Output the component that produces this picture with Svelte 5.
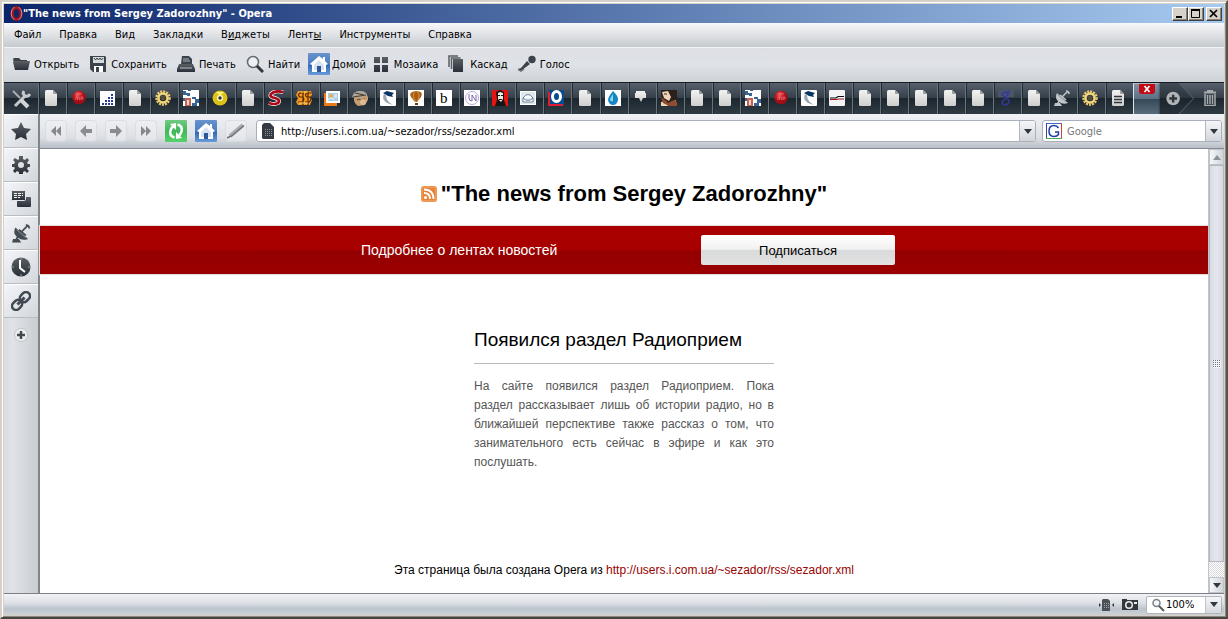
<script>
  const menus = [
    ['Файл', '', ''],
    ['Правка', '', ''],
    ['Вид', '', ''],
    ['Закладки', '', ''],
    ['В', 'и', 'джеты'],
    ['Лент', 'ы', ''],
    ['Инструменты', '', ''],
    ['Справка', '', '']
  ];
  const tools = [
    ['open', 'Открыть'],
    ['save', 'Сохранить'],
    ['print', 'Печать'],
    ['find', 'Найти'],
    ['home', 'Домой'],
    ['tile', 'Мозаика'],
    ['cascade', 'Каскад'],
    ['voice', 'Голос']
  ];
  const tabs = [
    'doc', 'ball', 'dots', 'doc', 'sun', 'blocks', 'disc', 'doc', 'ess', 'coin',
    'board', 'face', 'pen', 'balloon', 'bee', 'round', 'portrait', 'mail', 'oh', 'doc',
    'drop', 'bubble', 'photo', 'doc', 'doc', 'blocks', 'ball', 'pen', 'wire', 'doc',
    'doc', 'doc', 'doc', 'doc', 'eight', 'doc', 'dish', 'sun', 'text'
  ];
  const nav = ['rewind', 'back', 'forward', 'fast', 'reload', 'home', 'wand'];
  const panels = ['star', 'gear', 'notes', 'dish', 'clock', 'link'];
  let address = $state('http://users.i.com.ua/~sezador/rss/sezador.xml');
  let query = $state('');
</script>

{#snippet tabIcon(name)}
  <svg class="i16" viewBox="0 0 16 16" aria-hidden="true">
    {#if name === 'doc' || name === 'text'}
      <path d="M3.500 0H10l4 4v10.500q0 1.500-1.500 1.500h-9Q2 16 2 14.500v-13Q2 0 3.500 0z" fill="url(#paper)" />
      <path d="M10 0l4 4h-3q-1 0-1-1z" fill="#999d9f" />
      {#if name === 'text'}<path d="M4 6.500h8M4 9.500h8M4 12.500h8" stroke="#30363b" stroke-width="1.500" />{/if}
    {:else if name === 'ball'}
      <circle cx="8" cy="7.500" r="6.700" fill="url(#redball)" />
      <path d="M5 4q3-1.500 6 0M5 10V7q1.500-1 1.500 1v2M6.500 8q1.500-2 2 0v2M10 10V7h2v2h-2" fill="none" stroke="#ee8588" stroke-opacity=".75" stroke-width=".8" />
    {:else if name === 'dots'}
      <path fill="#fff" d="M1 1h15v15H1z" />
      <path d="M12 5h2M9 8h5M6 11h8M3 14h11" stroke="#263a9c" stroke-width="2" stroke-dasharray="2 1" />
    {:else if name === 'sun'}
      <circle cx="8" cy="8" r="6.500" fill="none" stroke="#e9ca6d" stroke-width="2.500" stroke-dasharray="2 1" />
      <circle cx="8" cy="8" r="4.500" fill="none" stroke="#f2d67c" stroke-width="2.500" />
      <circle cx="8" cy="8" r="2.500" fill="#554f38" />
    {:else if name === 'blocks'}
      <path fill="#fff" d="M0 0h16v16H0z" />
      <path fill="#386593" d="M0 1h3v2h4v3H4V5H0zM0 8h6v3H0zM9 7h4v2H9zM12 9h4v4h-4zM9 13h5v3H9zM5 0h3v1H5z" />
      <path fill="#c66450" d="M2 8h6v8H2z" /><path fill="#efd4ca" d="M4 10h2v5H4z" />
    {:else if name === 'disc'}
      <circle cx="8" cy="8" r="7.500" fill="#ddc119" /><path d="M4 2l4 4 4-4z" fill="#fff477" />
      <circle cx="8" cy="8" r="3" fill="#fff9c9" /><circle cx="8" cy="8" r="1.700" fill="#26313d" />
    {:else if name === 'ess'}
      <path d="M15 2Q7 0 3 4q-2 3 4 4 6 2 3 5-4 2-9 0" fill="none" stroke="#fff" stroke-width="4" />
      <path d="M15 2Q7 0 3 4q-2 3 4 4 6 2 3 5-4 2-9 0" fill="none" stroke="#ae0717" stroke-width="2.700" />
    {:else if name === 'coin'}
      <path d="M2 1h13l1 4-2 2 2 3-2 5H2l-2-3 2-4-2-3z" fill="#f09a20" />
      <path d="M8 3H4Q1 5 4 7h3q2 3-1 5H2M15 3h-4q-3 2 0 4h3q2 3-1 5H9M7 1v14M12 1v14" fill="none" stroke="#5d2600" stroke-width="1.200" />
      <path d="M12 2H5M3 13h9" stroke="#ffd368" />
    {:else if name === 'board'}
      <path fill="#ec7a19" d="M0 3h13v13H0z" /><path fill="#fff" d="M2 1h14v12H2z" />
      <path fill="#a5cee9" d="M4 3h10v8H4z" /><circle cx="7" cy="6" r="2" fill="#efab4f" /><path d="M4 10q4-4 6 0M10 5h3M10 7h3" stroke="#fff" fill="none" />
    {:else if name === 'face'}
      <path d="M2 6Q5 0 12 2q5 3 4 8l-3 5-7 1q-5-3-4-10" fill="#c69d72" />
      <path d="M0 7Q2 0 8 1q7 0 7 5L3 8z" fill="#aaa69c" /><path d="M1 7l13-2M3 3l9 2M5 10q2-2 3 0l5-1" stroke="#513b2a" fill="none" />
      <circle cx="11" cy="12" r="3" fill="#e1ba91" />
    {:else if name === 'pen'}
      <rect width="16" height="16" fill="#fff" rx="1" /><path d="M3 3l4-2 7 2-2 2 1 2-5-1z" fill="#083464" /><path d="M4 4Q1 9 7 13l6 2Q6 11 6 5z" fill="#9ba7b2" />
    {:else if name === 'balloon'}
      <path fill="#fff" d="M0 0h16v16H0z" /><path d="M8 1q8 0 5 6l-4 5H7L3 7q-3-5 5-6" fill="#a95e14" />
      <path d="M7 1Q3 6 8 12M9 1q4 4 0 11" stroke="#e2a650" stroke-width=".8" fill="none" /><path fill="#623a18" d="M7 13h3v2H7z" />
    {:else if name === 'bee'}
      <path fill="#fff" d="M0 0h16v16H0z" /><text x="4" y="13" font-family="Liberation Serif, serif" font-size="15">b</text>
    {:else if name === 'round'}
      <path fill="#fff" d="M0 0h16v16H0z" /><circle cx="8" cy="8" r="6.500" fill="none" stroke="#b6a9d7" />
      <path d="M5 4v4q0 3 3 3V5l4 6V5" stroke="#8069b0" fill="none" />
    {:else if name === 'portrait'}
      <path fill="#e71313" d="M0 0h16v16H0z" /><path fill="#171414" d="M4 2l4-2 4 2v8l2 6H3l2-6z" />
      <path fill="#eee9df" d="M6 3l2-1 3 1v6l-2 3-3-3z" /><path d="M6 5.500h2M9 5.500h2M7 9.500h3" stroke="#171414" />
    {:else if name === 'mail'}
      <path fill="#fff" d="M0 1h16v14H0z" /><path fill="#dfe6ec" d="M1 2h14v12H1z" /><path d="M3 8q5-7 10 0v4H3zm0 0q5 5 10 0" fill="#fff" stroke="#71879f" />
    {:else if name === 'oh'}
      <path fill="#074b8e" d="M1 0h15v16H1z" /><ellipse cx="8.500" cy="6.500" rx="4" ry="5" fill="none" stroke="#fff" stroke-width="3" /><path d="M1 2v13h14" fill="none" stroke="#df1c30" stroke-width="2" />
    {:else if name === 'drop'}
      <path fill="#fff" d="M0 0h16v16H0z" /><path d="M8 1q6 6 5 9-1 5-5 5t-5-5q0-3 5-9" fill="#1787c4" /><path d="M8 4q-3 4-3 6 1 2 3 1z" fill="#83d8f4" />
    {:else if name === 'bubble'}
      <path d="M3 1h9v2h1v5h-3l-2 4-2-4H2V3h1z" fill="url(#paper)" />
    {:else if name === 'photo'}
      <path fill="#2b211b" d="M0 0h16v16H0z" /><path fill="#efd4b7" d="M1 2l6-1 3 6-2 4-5-3zM0 12l5-1 2 5H0zM10 12l5-2-2 6z" />
      <path fill="#8e4c31" d="M0 7l4 3 3 3 6-3 3 2v4H8L2 13z" /><path d="M3 4h3" stroke="#43261b" />
    {:else if name === 'wire'}
      <rect width="16" height="16" rx="1" fill="#f3f3f3" /><path d="M1 8h6l2-1.500h6" stroke="#070b0e" fill="none" stroke-width="1.200" /><path d="M1 9.500h6l3-.5h5" stroke="#a60d1c" fill="none" stroke-width="1.200" />
    {:else if name === 'eight'}
      <path fill="#4c5568" d="M0 0h16v7H0z" /><path d="M12 1.500l-3 1q-5-1-5 2.500 2.500 3 6 0V3M8 8q5 2 2 6-5 2-6-1 0-3 4-4" fill="none" stroke="#3237a0" stroke-width="1.500" />
    {:else if name === 'dish'}
      {@render dishShape('#c1c5c8')}
    {/if}
  </svg>
{/snippet}

{#snippet dishShape(color)}
  <path d="M3 3q-3 5 2 9 4 3 9 1L3 3z" fill={color} /><path d="M6 5l6 5M8 7l6-6M12 1q3 0 3 3M5 11l-2 4" fill="none" stroke={color} stroke-width="1.500" /><path d="M4 5l8 7" stroke="#8b9196" stroke-width=".7" /><path d="M1 13h5l2 3H0z" fill={color} />
{/snippet}

{#snippet homeIcon()}
  <svg class="i22" viewBox="0 0 22 22" aria-hidden="true">
    <rect width="22" height="22" rx="1" fill="url(#bluebox)" />
    <path d="M11 3L2 11l2 1v7h14v-7l2-1-3-3V4h-2v2z" fill="#fff" /><path d="M11 7l-5 5v5h3v-4h4v4h3v-5z" fill="#d5e2f4" /><path fill="#2e5799" d="M9 13h4v6H9z" />
  </svg>
{/snippet}

{#snippet toolIcon(name)}
  {#if name === 'home'}
    {@render homeIcon()}
  {:else}
    <svg class="i18" viewBox="0 0 18 18" aria-hidden="true" fill="#3d434a">
      {#if name === 'open'}
        <path d="M1 4l1-1h5l2 2h6v3H3v4z" /><path d="M3 6h15l-2 9H3L1 7z" fill="url(#dark)" />
      {:else if name === 'save'}
        <path d="M1 1h15l1 1v15H4l-3-3z" /><path d="M4 2h11v6H4z" fill="#d7dadd" /><path d="M5 3l1.500 2L8 3l1.500 2L11 3l1.500 2L14 3" fill="none" stroke="#3d434a" /><path fill="#fff" d="M5 11h9v6H5z" /><path d="M7 12h3v5H7z" />
      {:else if name === 'print'}
        <path d="M5 1h7l3 3v5H4z" /><path d="M6 4h6M6 6h7" stroke="#aeb2b6" /><path d="M2 9h14l2 5v3H0v-3z" fill="url(#dark)" /><path d="M3 13h12" stroke="#bbc0c4" />
      {:else if name === 'find'}
        <circle cx="7" cy="7" r="5.500" fill="#eef1f4" stroke="#656b70" stroke-width="1.500" /><path d="M11 11l6 6" stroke="#34383c" stroke-width="3" />
      {:else if name === 'tile'}
        <path d="M2 2h6v6H2zM10 2h6v6h-6zM2 10h6v7H2zM10 10h6v7h-6z" fill="url(#dark)" />
      {:else if name === 'cascade'}
        <path d="M1 12V1h9M3.500 14V3h9" fill="none" stroke="#555c62" stroke-width="1.500" /><path fill="url(#dark)" d="M5 4h10v13H5z" />
      {:else}
        <circle cx="14" cy="4.500" r="3.700" /><path d="M9 6l3 3-8 6-3 1-1-2 3-1z" /><path d="M0 14l3 2 3-2" stroke="#6c7176" stroke-width="1.500" fill="none" />
      {/if}
    </svg>
  {/if}
{/snippet}

{#snippet navIcon(name)}
  {#if name === 'home'}
    {@render homeIcon()}
  {:else if name === 'reload'}
    <svg class="i22" viewBox="0 0 22 22" aria-hidden="true"><rect width="22" height="22" rx="1" fill="url(#greenbox)" /><path d="M9.500 17.500Q4 16 5.500 10.500 6.500 7 9 6" fill="none" stroke="#fff" stroke-width="2.500" /><path d="M5 4l6-1v7z" fill="#fff" /><path d="M12.500 4.500Q18 6 16.500 11.500 15.500 15 13 16" fill="none" stroke="#fff" stroke-width="2.500" /><path d="M17 18l-6 1v-7z" fill="#fff" /></svg>
  {:else}
    <svg class="i22" viewBox="0 0 22 22" aria-hidden="true">
      <rect x=".5" y=".5" width="21" height="21" rx="3" fill="#eff0f3" fill-opacity=".5" stroke="#d3d6da" stroke-opacity=".65" />
      {#if name === 'rewind'}<path d="M11 6v10l-5-5zM16 6v10l-5-5z" fill="#85888c" />
      {:else if name === 'fast'}<path d="M6 6v10l5-5zM11 6v10l5-5z" fill="#85888c" />
      {:else if name === 'back'}<path d="M11 5v4h6v4h-6v4l-6-6z" fill="#898c90" />
      {:else if name === 'forward'}<path d="M11 5v4H5v4h6v4l6-6z" fill="#898c90" />
      {:else}<path d="M5 16L18 5" stroke="#a9acb2" stroke-width="4" /><path d="M6 16.500L19 5.500M2 18l4-2" stroke="#70747b" stroke-width="1.500" />{/if}
    </svg>
  {/if}
{/snippet}

{#snippet panelIcon(name)}
  <svg class="i20" viewBox="0 0 20 20" aria-hidden="true" fill="url(#dark)">
    {#if name === 'star'}<path d="M10 1l3 6 7 1-5 5 1 6-6-3-6 3 1-6-5-5 7-1z" />
    {:else if name === 'gear'}
      <path d="M8 1h4v3l2 1 2-2 2 2-2 3 1 1h2v3h-2l-1 2 2 2-2 2-2-2-2 1v2H8v-2l-2-1-2 2-2-2 2-3-1-1H1V9h2l1-2-2-2 2-2 3 2 1-1z" /><circle cx="10" cy="10" r="3" fill="#dfe2e6" />
    {:else if name === 'notes'}
      <rect x="6" y="8" width="14" height="10" rx="1" /><rect x=".5" y="1.500" width="14" height="10" rx="1" stroke="#e6e8eb" /><path d="M3 4.500h9M3 6.500h9M3 8.500h6" stroke="#f3f4f5" stroke-dasharray="3 1" />
    {:else if name === 'dish'}
      <g transform="translate(1 1) scale(1.150)">{@render dishShape('#434a52')}</g>
    {:else if name === 'clock'}
      <circle cx="10" cy="10" r="9.500" /><path d="M9 3v8l5 4" stroke="#fff" stroke-width="2" fill="none" /><path d="M10 1v2M1 10h2M17 10h2M10 17v2" stroke="#9a9fa4" />
    {:else}
      <g transform="rotate(-45 10 10)" fill="none" stroke="#414951" stroke-width="2.500"><rect x="-1" y="6" width="11" height="8" rx="4" /><rect x="10" y="6" width="11" height="8" rx="4" /><path d="M5 10h10" stroke-width="3" /></g>
    {/if}
  </svg>
{/snippet}

{#snippet arrow(up)}
  <svg class="arrow" viewBox="0 0 8 5" aria-hidden="true"><path d={up ? 'M0 5l4-5 4 5z' : 'M0 0h8L4 5z'} fill={up ? '#8d9196' : '#33363a'} /></svg>
{/snippet}

<svg class="defs" aria-hidden="true">
  <defs>
    <linearGradient id="paper" x2="0" y2="1"><stop stop-color="#f3f3f2" /><stop offset="1" stop-color="#cecfcd" /></linearGradient>
    <linearGradient id="dark" x2="0" y2="1"><stop stop-color="#5b6066" /><stop offset="1" stop-color="#292f38" /></linearGradient>
    <linearGradient id="bluebox" x2="0" y2="1"><stop stop-color="#6893cd" /><stop offset=".5" stop-color="#4d7ec1" /><stop offset=".55" stop-color="#3469b3" /><stop offset="1" stop-color="#679bdd" /></linearGradient>
    <linearGradient id="greenbox" x2="0" y2="1"><stop stop-color="#70ca80" /><stop offset=".5" stop-color="#42b75a" /><stop offset="1" stop-color="#55d26b" /></linearGradient>
    <radialGradient id="redball" cx=".4" cy=".3"><stop stop-color="#ee686b" /><stop offset=".5" stop-color="#cd1f27" /><stop offset="1" stop-color="#a00d14" /></radialGradient>
  </defs>
</svg>

<div class="window">
  <header class="title">
    <svg class="opera" viewBox="0 0 12 14" aria-hidden="true"><ellipse cx="6" cy="7" rx="4" ry="5.500" fill="none" stroke="#a5141c" stroke-width="3" /><path d="M4 1Q1 3 1 7t3 6M8 1q3 2 3 6t-3 6" fill="none" stroke="#e0a4a8" stroke-width=".8" /></svg>
    <span>"The news from Sergey Zadorozhny" - Opera</span>
    <div class="winbtns">
      <button aria-label="Свернуть"><svg viewBox="0 0 12 10"><path fill="#000" d="M2 7h6v2H2z" /></svg></button>
      <button aria-label="Развернуть"><svg viewBox="0 0 12 10"><path d="M1.500 1v7.500h8V1M1 1h9" fill="none" stroke="#000" /><path fill="#000" d="M1 0h9v2H1z" /></svg></button>
      <button class="close" aria-label="Закрыть"><svg viewBox="0 0 12 10"><path d="M2 1l7 7M9 1L2 8" stroke="#000" stroke-width="1.700" /></svg></button>
    </div>
  </header>

  <nav class="menu">
    {#each menus as [a, u, b]}
      <button>{a}{#if u}<u>{u}</u>{/if}{b}</button>
    {/each}
  </nav>

  <div class="tools">
    {#each tools as [icon, label]}
      <button class:boxed={icon === 'home'}>{@render toolIcon(icon)}<span>{label}</span></button>
    {/each}
  </div>

  <div class="tabbar">
    <button class="setup" aria-label="Панели">
      <svg class="i20" viewBox="0 0 20 20" fill="none"><path d="M4 17L15 6" stroke="#c6c9cb" stroke-width="3" /><path d="M13 2q-2 3 1 5 3 1 5-2" stroke="#c6c9cb" stroke-width="3" /><path d="M2 2l7 7" stroke="#a9aeb2" stroke-width="2" /><path d="M10 11l7 7" stroke="#d2d4d5" stroke-width="4" /></svg>
    </button>
    {#each tabs as tab}
      <button class="tab" aria-label="Вкладка">{@render tabIcon(tab)}</button>
    {/each}
    <div class="current"><button aria-label="Закрыть вкладку"><svg viewBox="0 0 16 10"><path d="M5.500 2l5 6M10.500 2l-5 6" stroke="#fff" stroke-width="1.700" /></svg></button></div>
    <button class="add" aria-label="Новая вкладка">
      <svg viewBox="0 0 40 32"><path d="M0 0h21l15 16-15 16H0z" fill="#1a2229" fill-opacity=".35" /><path d="M21 0l15 16-15 16" fill="none" stroke="#5c646b" /><circle cx="15" cy="16" r="7" fill="#b0b4b7" /><path d="M15 12v8M11 16h8" stroke="#2f373e" stroke-width="2.500" /></svg>
    </button>
    <button class="bin" aria-label="Корзина">
      <svg class="i16" viewBox="0 0 16 16" fill="none" stroke="#a6abae"><path d="M2 2.500h12M6 2V.500h4V2" stroke-width="2" /><path d="M3 4v11.500h10V4M5.500 5v9M8 5v9M10.500 5v9" stroke-width="1.500" /></svg>
    </button>
  </div>

  <div class="body">
    <aside>
      {#each panels as p}
        <button class="panel" aria-label={p}>{@render panelIcon(p)}</button>
      {/each}
      <button class="more" aria-label="Добавить панель">
        <svg class="i16" viewBox="0 0 16 16"><circle cx="8" cy="8" r="6.500" fill="#eceeef" stroke="#c1c5c9" /><path d="M8 4v8M4 8h8" stroke="#42484e" stroke-width="2.500" /></svg>
      </button>
    </aside>

    <div class="right">
      <div class="address">
        <div class="nav">
          {#each nav as n}
            <button aria-label={n}>{@render navIcon(n)}</button>
          {/each}
        </div>
        <div class="field url">
          <svg class="i16" viewBox="0 0 16 16"><path d="M4 0h6l4 4v12H3L2 15V2z" fill="#343b43" /><path d="M5 6.500h7M5 8.500h7M5 10.500h7M5 12.500h7" stroke="#8b9197" stroke-dasharray="1 1" /></svg>
          <input type="text" aria-label="Адрес" bind:value={address} />
          <button aria-label="Показать адреса">{@render arrow(false)}</button>
        </div>
        <div class="field search">
          <svg class="i16" viewBox="0 0 16 16"><path fill="#fff" d="M0 0h16v16H0z" /><path d="M0 .5h16" stroke="#4268cf" /><path d="M15.500 0v16" stroke="#ce4131" /><path d="M.5 0v16" stroke="#38489f" /><path d="M0 15.500h16" stroke="#4eab58" /><path d="M12.500 5Q11 2.500 8 2.500 3 2.500 3 8t5 5.500q3 0 4.500-2V9H9" fill="none" stroke="#1c3eaa" stroke-width="1.500" /></svg>
          <input type="text" aria-label="Поиск" placeholder="Google" bind:value={query} />
          <button aria-label="Выбрать поиск">{@render arrow(false)}</button>
        </div>
      </div>

      <div class="view">
        <main>
          <h1>
            <svg class="i16" viewBox="0 0 16 16" aria-hidden="true"><rect width="16" height="16" rx="3" fill="#e78337" /><rect x="1" y="1" width="14" height="14" rx="2" fill="none" stroke="#f2ad78" /><circle cx="4.500" cy="11.500" r="1.500" fill="#fff" /><path d="M3 7q6 0 6 6M3 3.500q9.500 0 9.500 9.500" fill="none" stroke="#fff" stroke-width="1.800" /></svg>
            <span>"The news from Sergey Zadorozhny"</span>
          </h1>
          <section class="band">
            <div class="bandin">
              <a href="#feeds">Подробнее о лентах новостей</a>
              <button>Подписаться</button>
            </div>
          </section>
          <article>
            <h2>Появился раздел Радиоприем</h2>
            <p>На сайте появился раздел Радиоприем. Пока раздел&nbsp;рассказывает лишь об истории радио, но в ближайшей перспективе также рассказ о том, что занимательного есть сейчас в эфире и как это послушать.</p>
          </article>
          <footer>Эта страница была создана Opera из <a href="#source">http://users.i.com.ua/~sezador/rss/sezador.xml</a></footer>
        </main>
        <div class="scroll">
          <button class="up" aria-label="Вверх">{@render arrow(true)}</button>
          <div class="thumb"><span class="grip"></span></div>
          <div class="hatch"></div>
          <button aria-label="Вниз">{@render arrow(false)}</button>
        </div>
      </div>
    </div>
  </div>

  <div class="status">
    <button aria-label="По ширине"><svg class="i16" viewBox="0 0 16 16"><path d="M5 2h5l2 2v10H4V3z" fill="#4b5157" /><path d="M6 6.500h5M6 8.500h5M6 10.500h5" stroke="#9fa4a8" stroke-dasharray="1 1" /><path d="M1 6l2 2-2 2zM16 6l-2 2 2 2z" fill="#30353a" /></svg></button>
    <button aria-label="Изображения"><svg class="i16" viewBox="0 0 16 16"><path d="M0 2h5v1h11v10H0z" fill="#33383d" /><circle cx="7" cy="8" r="4" fill="#eee" /><circle cx="7" cy="8" r="2.500" fill="#343a3f" /><path fill="#eee" d="M12 5h3v2h-3z" /></svg></button>
    <label class="zoom">
      <svg class="i16" viewBox="0 0 16 16"><circle cx="6.500" cy="6" r="3.500" fill="#f5f7fa" stroke="#7b8085" stroke-width="1.500" /><path d="M9 9l5 5" stroke="#555b60" stroke-width="2" /></svg>
      <select aria-label="Масштаб"><option>100%</option></select>
      <span class="drop">{@render arrow(false)}</span>
    </label>
  </div>
</div>

<style>
  :global(body) { margin: 0; background: #fff; }
  * { box-sizing: border-box; }
  button, input, select { font: inherit; color: inherit; margin: 0; padding: 0; border: 0; background: none; min-width: 0; }
  svg { display: block; flex: none; }
  .defs { position: absolute; width: 0; height: 0; }
  .i16 { width: 16px; height: 16px; }
  .i18 { width: 18px; height: 18px; }
  .i20 { width: 20px; height: 20px; }
  .i22 { width: 22px; height: 22px; }
  .arrow { width: 8px; height: 5px; }

  .window {
    min-height: 100vh; display: flex; flex-direction: column;
    border: 2px solid #d5d0c8; border-right-color: #57544e; border-bottom-color: #45443f;
    padding: 2px; background: #d6d1c9;
    box-shadow: inset 1px 1px #fff, inset -1px -1px #8b887f;
    font: 11px "DejaVu Sans Condensed", "DejaVu Sans", sans-serif; color: #000;
  }

  .title {
    height: 19px; flex: none; display: flex; align-items: center; padding: 0 2px 0 6px;
    background: linear-gradient(90deg, #0b256a, #a6caf0); color: #fff; font-weight: bold;
  }
  .opera { width: 13px; height: 15px; }
  .winbtns { margin-left: auto; display: flex; }
  .winbtns button { width: 16px; height: 14px; background: #d6d1c9; border: 1px solid; border-color: #fff #404040 #404040 #fff; box-shadow: inset -1px -1px #88857d; }
  .winbtns svg { width: 12px; height: 10px; margin-left: 1px; }
  .winbtns .close { margin-left: 2px; }

  .menu {
    height: 24px; flex: none; display: flex; align-items: center; gap: 18px; padding: 0 10px 2px;
    background: linear-gradient(#f8f8fa, #dfe1e5 50%, #c5cacf);
  }
  .tools {
    height: 35px; flex: none; display: flex; align-items: center; gap: 10px; padding: 0 8px 2px;
    border-top: 1px solid #f3f4f6; background: linear-gradient(#dddfe5, #dfe2e6 50%, #cdd2d6);
  }
  .tools button { display: flex; align-items: center; gap: 4px; }
  .tools .boxed { gap: 2px; margin: 0 -4px 0 -2px; }

  .tabbar {
    height: 32px; flex: none; display: flex; border-top: 1px solid #161d23;
    background: linear-gradient(#56616d, #343f4a 48%, #1c262e 50%, #29333b 80%, #2f3b44);
  }
  .tabbar button { display: flex; align-items: center; justify-content: center; }
  .setup { width: 34px; }
  .tab { flex: 1; border-left: 1px solid #69737c; box-shadow: inset 1px 0 #202a31; padding-right: 3px; padding-bottom: 2px; }
  .current { width: 27px; border-left: 1px solid #dfe5eb; border-top: 1px solid #aeb7c0; background: linear-gradient(#7e93a6, #5c7183 49%, #354858 50%, #586c7c); }
  .current button { width: 16px; height: 10px; margin-left: 5px; background: #c30b16; border-radius: 0 0 3px 3px; }
  .current svg { width: 16px; height: 10px; }
  .add { width: 36px; }
  .add svg { width: 40px; height: 31px; }
  .bin { width: 28px; padding-bottom: 2px; }

  .body { flex: 1; display: flex; }
  aside { width: 36px; flex: none; display: flex; flex-direction: column; background: linear-gradient(90deg, #d9dce0, #e0e2e8 25%, #c9ced1); border-right: 2px solid #7f858b; }
  .panel { height: 34px; display: flex; align-items: center; justify-content: center; border-top: 1px solid #fff; border-bottom: 1px solid #b8bdc2; background: linear-gradient(135deg, #f4f5f8, #d2d6db); }
  .more { height: 34px; display: flex; align-items: center; justify-content: center; }

  .right { flex: 1; min-width: 0; display: flex; flex-direction: column; }
  .address {
    height: 35px; flex: none; display: flex; align-items: center; padding: 0 2px 0 5px;
    border-bottom: 1px solid #858c94; background: linear-gradient(#f0f2f5, #dcdfe4 70%, #b9bec7);
  }
  .nav { display: flex; gap: 8px; margin-right: 9px; }
  .field { height: 22px; display: flex; align-items: center; background: #fff; border: 1px solid #aab0b9; border-radius: 3px; padding-left: 3px; overflow: hidden; }
  .field input { flex: 1; outline: 0; margin-left: 5px; height: 20px; }
  .field input::placeholder { color: #777; opacity: 1; }
  .field button { width: 16px; align-self: stretch; display: flex; align-items: center; justify-content: center; border-left: 1px solid #b2b7bf; background: linear-gradient(#f5f6f8, #d2d6dc); }
  .url { flex: 1; }
  .search { width: 180px; margin-left: 6px; }

  .view { flex: 1; display: flex; }
  main { flex: 1; min-width: 0; background: #fff; font-family: "Liberation Sans", Arial, sans-serif; }
  h1 { margin: 0; height: 77px; padding-bottom: 12px; padding-top: 24px; display: flex; align-items: center; justify-content: center; gap: 4px; font-size: 22px; line-height: 28px; }
  .band { height: 48px; background: linear-gradient(#a00 0, #a80000 50%, #940000 52%, #9b0000); box-shadow: 0 0 1px 1px #e5dede; }
  .bandin { width: 542px; height: 48px; margin: 0 auto; padding-left: 8px; display: flex; align-items: center; justify-content: space-between; font-size: 14px; }
  .bandin a { color: #fff; text-decoration: none; }
  .bandin button { width: 194px; height: 30px; border-radius: 2px; background: linear-gradient(#fff, #f1f1f1 48%, #d9dadb 50%, #e2e2e2); font-size: 13px; }
  article { width: 300px; margin: 0 auto; padding-top: 54px; }
  h2 { margin: 0; font-size: 19px; font-weight: normal; line-height: 24px; padding-bottom: 11px; border-bottom: 1px solid #bbb; white-space: nowrap; }
  p { margin: 13px 0 0; font-size: 12px; line-height: 19px; color: #555; text-align: justify; }
  footer { margin-top: 89px; text-align: center; font-size: 12px; line-height: 18px; }
  footer a { color: #900; text-decoration: none; }

  .scroll { width: 16px; flex: none; display: flex; flex-direction: column; background: #dfe2e8; border-left: 1px solid #c1c5cb; }
  .scroll button { height: 16px; display: flex; align-items: center; justify-content: center; border: 1px solid #bec3ca; background: linear-gradient(90deg, #f5f6f8, #d0d4da); }
  .thumb { flex: 1; display: flex; align-items: center; justify-content: center; border: 1px solid #b3b8c0; background: linear-gradient(90deg, #d8dbe3, #e6e7ee 50%, #d5d9df); }
  .grip { width: 8px; height: 8px; background: conic-gradient(#f3f4f6 75%, #6f757c 0) 0 0 / 2px 2px; }
  .hatch { height: 15px; background: repeating-conic-gradient(#d8d8dc 0 25%, #fff 0 50%) 0 0 / 2px 2px; }

  .status { height: 22px; flex: none; display: flex; align-items: center; justify-content: flex-end; gap: 8px; padding-right: 2px; border-top: 1px solid #7b8086; background: linear-gradient(#f2f3f6, #dbdfe4 45%, #bcc4ce 70%, #cdd1d4); }
  .zoom { width: 76px; height: 18px; display: flex; align-items: center; padding-left: 3px; background: #fff; border: 1px solid #b0b5bc; border-radius: 2px; }
  .zoom select { flex: 1; appearance: none; outline: 0; }
  .drop { width: 16px; align-self: stretch; display: flex; align-items: center; justify-content: center; border-left: 1px solid #c0c4ca; background: linear-gradient(#f5f6f8, #d5d9de); }
</style>
